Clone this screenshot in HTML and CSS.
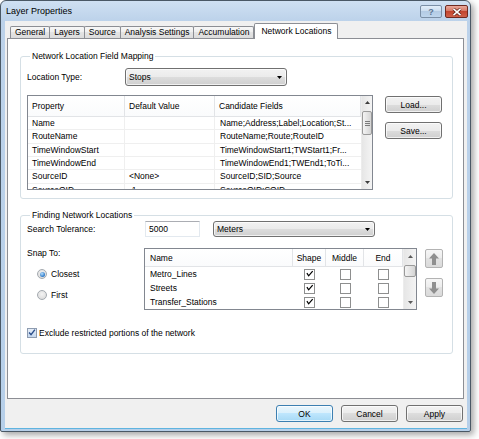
FILE: index.html
```html
<!DOCTYPE html>
<html>
<head>
<meta charset="utf-8">
<title>Layer Properties</title>
<link rel="stylesheet" href="styles.css">
</head>
<body>
<div class="window">
  <div class="titlebar">
    <span class="title">Layer Properties</span>
    <div class="caption">
      <span class="cap help">?</span>
      <span class="cap close"><svg width="10" height="8" viewBox="0 0 10 8"><path d="M1.5 0.8 L8.5 7.2 M8.5 0.8 L1.5 7.2" stroke="#5a1d14" stroke-width="3"/><path d="M1.5 0.8 L8.5 7.2 M8.5 0.8 L1.5 7.2" stroke="#fff" stroke-width="1.6"/></svg></span>
    </div>
  </div>
  <div class="client">
    <div class="tabs">
      <span class="tab">General</span>
      <span class="tab">Layers</span>
      <span class="tab">Source</span>
      <span class="tab">Analysis Settings</span>
      <span class="tab">Accumulation</span>
      <span class="tab active">Network Locations</span>
    </div>
    <div class="panel">
      <fieldset class="group map-group">
        <legend>Network Location Field Mapping</legend>
        <div class="type-row">
          <span class="label type-label">Location Type:</span>
          <div class="combo type-combo"><span>Stops</span><svg width="5" height="3" viewBox="0 0 5 3"><polygon points="0,0 5,0 2.5,3" fill="#000"/></svg></div>
        </div>
        <div class="mapping">
          <div class="listview map-list">
            <div class="lv-main">
              <div class="lv-head map-cols">
                <span>Property</span><span>Default Value</span><span>Candidate Fields</span>
              </div>
              <div class="lv-row map-cols"><span>Name</span><span></span><span>Name;Address;Label;Location;St...</span></div>
              <div class="lv-row map-cols"><span>RouteName</span><span></span><span>RouteName;Route;RouteID</span></div>
              <div class="lv-row map-cols"><span>TimeWindowStart</span><span></span><span>TimeWindowStart1;TWStart1;Fr...</span></div>
              <div class="lv-row map-cols"><span>TimeWindowEnd</span><span></span><span>TimeWindowEnd1;TWEnd1;ToTi...</span></div>
              <div class="lv-row map-cols"><span>SourceID</span><span>&lt;None&gt;</span><span>SourceID;SID;Source</span></div>
              <div class="lv-row map-cols"><span>SourceOID</span><span>-1</span><span>SourceOID;SOID</span></div>
            </div>
            <div class="vscroll vs-map">
              <span class="sb-arrow"><svg width="5" height="3" viewBox="0 0 5 3"><polygon points="0,3 5,3 2.5,0" fill="#3d3d3d"/></svg></span>
              <span class="sb-thumb"><i></i><i></i><i></i></span>
              <span class="sb-track"></span>
              <span class="sb-arrow"><svg width="5" height="3" viewBox="0 0 5 3"><polygon points="0,0 5,0 2.5,3" fill="#3d3d3d"/></svg></span>
            </div>
          </div>
          <div class="side-btns">
            <span class="btn">Load...</span>
            <span class="btn">Save...</span>
          </div>
        </div>
      </fieldset>

      <fieldset class="group find-group">
        <legend>Finding Network Locations</legend>
        <div class="tol-row">
          <span class="label tol-label">Search Tolerance:</span>
          <span class="textbox">5000</span>
          <div class="combo units-combo"><span>Meters</span><svg width="5" height="3" viewBox="0 0 5 3"><polygon points="0,0 5,0 2.5,3" fill="#000"/></svg></div>
        </div>
        <div class="snap-row">
          <div class="snap-col">
            <span class="label snap-label">Snap To:</span>
            <label class="radio-row"><span class="radio on"></span>Closest</label>
            <label class="radio-row"><span class="radio"></span>First</label>
          </div>
          <div class="listview snap-list">
            <div class="lv-main">
              <div class="lv-head snap-cols">
                <span>Name</span><span class="c">Shape</span><span class="c">Middle</span><span class="c">End</span>
              </div>
              <div class="snap-row-item snap-cols">
                <span>Metro_Lines</span>
                <span class="c"><span class="chk on"><svg width="9" height="9" viewBox="0 0 9 9"><path d="M1 3 L3 6 L7.5 0.8" fill="none" stroke="#000" stroke-width="1.4"/></svg></span></span>
                <span class="c"><span class="chk"></span></span>
                <span class="c"><span class="chk"></span></span>
              </div>
              <div class="snap-row-item snap-cols">
                <span>Streets</span>
                <span class="c"><span class="chk on"><svg width="9" height="9" viewBox="0 0 9 9"><path d="M1 3 L3 6 L7.5 0.8" fill="none" stroke="#000" stroke-width="1.4"/></svg></span></span>
                <span class="c"><span class="chk"></span></span>
                <span class="c"><span class="chk"></span></span>
              </div>
              <div class="snap-row-item snap-cols">
                <span>Transfer_Stations</span>
                <span class="c"><span class="chk on"><svg width="9" height="9" viewBox="0 0 9 9"><path d="M1 3 L3 6 L7.5 0.8" fill="none" stroke="#000" stroke-width="1.4"/></svg></span></span>
                <span class="c"><span class="chk"></span></span>
                <span class="c"><span class="chk"></span></span>
              </div>
            </div>
            <div class="vscroll vs-snap">
              <span class="sb-arrow up2"><svg width="5" height="3" viewBox="0 0 5 3"><polygon points="0,3 5,3 2.5,0" fill="#5a5a5a"/></svg></span>
              <span class="sb-thumb small"></span>
              <span class="sb-track"></span>
              <span class="sb-arrow down2"><svg width="5" height="3" viewBox="0 0 5 3"><polygon points="0,0 5,0 2.5,3" fill="#5a5a5a"/></svg></span>
            </div>
          </div>
          <div class="move-btns">
            <span class="move-btn"><svg width="10" height="12" viewBox="0 0 10 12"><path d="M5 0 L10 5.5 L7 5.5 L7 12 L3 12 L3 5.5 L0 5.5 Z" fill="#8f8f8f"/></svg></span>
            <span class="move-btn"><svg width="10" height="12" viewBox="0 0 10 12"><path d="M5 12 L10 6.5 L7 6.5 L7 0 L3 0 L3 6.5 L0 6.5 Z" fill="#8f8f8f"/></svg></span>
          </div>
        </div>
        <label class="exclude-row"><span class="chk blue"><svg width="9" height="9" viewBox="0 0 9 9"><path d="M1.2 4.5 L3.4 7 L7.8 1.2" fill="none" stroke="#2b4f8c" stroke-width="1.6"/></svg></span>Exclude restricted portions of the network</label>
      </fieldset>
    </div>
    <div class="footer">
      <span class="btn default">OK</span>
      <span class="btn">Cancel</span>
      <span class="btn">Apply</span>
    </div>
  </div>
</div>
</body>
</html>
```

FILE: styles.css
```css
* { box-sizing: border-box; }
html, body { margin: 0; padding: 0; background: #fff; }
body {
  font-family: "Liberation Sans", Arial, sans-serif;
  font-size: 8.5px;
  color: #000;
  width: 479px;
  height: 439px;
  overflow: hidden;
}

.window {
  width: 471px;
  height: 432px;
  border: 1px solid #4a5865;
  border-radius: 6px 6px 2px 2px;
  background: linear-gradient(#cfe0f2, #bcd2ea 20px, #b6cfe9);
  box-shadow: 3px 3px 6px rgba(0, 0, 0, 0.35);
  padding: 0 3px 2px 4px;
  display: flex;
  flex-direction: column;
}

.titlebar {
  height: 20px;
  margin: 0 -3px 0 -4px;
  padding: 0 2px 0 5px;
  display: flex;
  align-items: center;
  justify-content: space-between;
}
.title { font-size: 9px; color: #000; }
.caption { display: flex; gap: 3px; align-self: flex-start; margin-top: 4px; }
.cap {
  height: 13px;
  border-radius: 2px;
  display: flex;
  align-items: center;
  justify-content: center;
}
.help {
  width: 22px;
  border: 1px solid #7b8fa6;
  background: linear-gradient(#e3eef9, #c9dbee 50%, #b4cbe4 50%, #bed5ec);
  color: #5d7592;
  font-weight: bold;
  font-size: 9px;
}
.close {
  width: 23px;
  border: 1px solid #6e2a21;
  background: linear-gradient(#e9a99c, #d4735f 50%, #c2452f 50%, #d0614a);
}

.client {
  flex: 1;
  background: #f0f0f0;
  display: flex;
  flex-direction: column;
  border-bottom: 1px solid #5fb4e0;
}

.tabs {
  height: 17px;
  display: flex;
  align-items: flex-end;
  padding-left: 5px;
}
.tab {
  height: 12px;
  line-height: 11px;
  padding: 0 4px;
  border: 1px solid #8c8e94;
  border-bottom: none;
  margin-right: -1px;
  border-radius: 2px 2px 0 0;
  background: linear-gradient(#f7f7f7, #eeeeee 50%, #e4e4e4 50%, #dcdcdc);
  white-space: nowrap;
}
.tab.active {
  height: 16px;
  line-height: 14px;
  padding: 0 6px;
  margin: 0 0 -1px 1px;
  background: #fff;
  position: relative;
  z-index: 1;
}

.panel {
  height: 361px;
  margin: 0 3px 0 2px;
  background: #fff;
  border: 1px solid #8c8e94;
  padding-top: 11px;
}

.group {
  border: 1px solid #d5dfe5;
  border-radius: 3px;
  margin: 0 10px 0 12px;
  padding: 0 0 8px 6px;
  min-width: 0;
}
.group legend {
  padding: 0 2px;
  margin-left: 3px;
  height: 12px;
  line-height: 12px;
}
.find-group { margin-top: 10px; padding-bottom: 15px; }

.label { white-space: nowrap; }
.type-row { display: flex; align-items: center; height: 18px; margin-top: 6px; }
.type-label { width: 98px; }

.combo {
  height: 18px;
  border: 1px solid #707070;
  border-radius: 3px;
  background: linear-gradient(#f2f2f2, #ebebeb 50%, #dddddd 50%, #cfcfcf);
  box-shadow: inset 0 0 0 1px rgba(255, 255, 255, 0.7);
  display: flex;
  align-items: center;
  justify-content: space-between;
  padding: 0 4px 0 3px;
}
.type-combo { width: 162px; }
.units-combo { width: 162px; height: 16px; margin-left: 13px; }

.mapping { display: flex; gap: 12px; margin-top: 9px; }

.listview {
  border: 1px solid #828790;
  background: #fff;
  display: flex;
  overflow: hidden;
}
.lv-main { flex: 1; min-width: 0; overflow: hidden; }
.map-list { width: 346px; height: 95px; }
.map-cols { display: grid; grid-template-columns: 97px 90px 1fr; }
.lv-head { background: linear-gradient(#ffffff, #fafbfc); }
.map-list .lv-head { height: 21px; border-bottom: 1px solid #e2e4e7; }
.lv-head > span {
  display: flex;
  align-items: center;
  padding-left: 4px;
  border-right: 1px solid #e2e4e7;
  white-space: nowrap;
}
.lv-head > span.c { justify-content: center; padding-left: 0; }
.lv-row { height: 13.34px; border-bottom: 1px solid #efefef; }
.lv-row > span {
  display: flex;
  align-items: center;
  padding-left: 4px;
  border-right: 1px solid #efefef;
  white-space: nowrap;
  overflow: hidden;
}
.lv-row > span:last-child { padding-left: 5px; border-right: none; }

.vscroll {
  background: linear-gradient(90deg, #e6e6e6, #f4f4f4);
  border-left: 1px solid #ececec;
  display: flex;
  flex-direction: column;
}
.vs-map { width: 11px; }
.vs-snap { width: 13px; }
.sb-arrow { height: 13px; display: flex; align-items: center; justify-content: center; }
.sb-track { flex: 1; }
.sb-thumb {
  margin: 2px 0 0;
  height: 24px;
  border: 1px solid #9a9a9a;
  border-radius: 2px;
  background: linear-gradient(90deg, #f4f4f4, #e4e4e4 50%, #d4d4d4);
  display: flex;
  flex-direction: column;
  align-items: center;
  justify-content: center;
  gap: 1px;
}
.sb-thumb i { display: block; width: 5px; height: 1px; background: #7a7a7a; }
.sb-thumb.small { height: 12px; margin-top: 1px; }
.up2 { height: 15px; }
.down2 { height: 14px; }

.side-btns { display: flex; flex-direction: column; gap: 9px; padding-top: 1px; }

.btn {
  width: 57px;
  height: 17px;
  border: 1px solid #707070;
  border-radius: 3px;
  background: linear-gradient(#f2f2f2, #ebebeb 50%, #dddddd 50%, #cfcfcf);
  box-shadow: inset 0 0 0 1px rgba(255, 255, 255, 0.7);
  display: flex;
  align-items: center;
  justify-content: center;
}
.btn.default {
  border-color: #3c7fb1;
  background: linear-gradient(#eaf6fd, #d9f0fc 50%, #bee6fd 50%, #a7d9f5);
}

.tol-row { display: flex; align-items: center; height: 16px; }
.tol-label { width: 118px; }
.textbox {
  width: 55px;
  height: 16px;
  border: 1px solid #e3e9ef;
  border-top-color: #abadb3;
  background: #fff;
  display: flex;
  align-items: center;
  padding-left: 3px;
}

.snap-row { display: flex; margin-top: 11px; }
.snap-col { width: 117px; display: flex; flex-direction: column; }
.snap-label { line-height: 10px; height: 10px; }
.radio-row {
  display: flex;
  align-items: center;
  gap: 4px;
  height: 10px;
  margin-top: 11px;
  padding-left: 10px;
}
.radio {
  width: 10px;
  height: 10px;
  border-radius: 50%;
  border: 1px solid #a4aab0;
  background: radial-gradient(circle at 50% 40%, #f4f4f4, #d6d6d6);
  display: flex;
  align-items: center;
  justify-content: center;
}
.radio.on::after {
  content: "";
  width: 5px;
  height: 5px;
  border-radius: 50%;
  background: radial-gradient(circle at 40% 35%, #b7e0ff, #2b77c6 70%);
}

.snap-list { width: 273px; height: 62px; }
.snap-cols { display: grid; grid-template-columns: 148px 33px 38px 39px; }
.snap-list .lv-head { height: 18px; border-bottom: 1px solid #e2e4e7; }
.snap-list .lv-head > span:first-child { padding-left: 5px; }
.snap-row-item { height: 14px; }
.snap-row-item > span { display: flex; align-items: center; padding-left: 5px; white-space: nowrap; }
.snap-row-item > span.c { justify-content: center; padding-left: 0; }

.chk {
  width: 11px;
  height: 11px;
  border: 1px solid #8e8f8f;
  background: #fff;
  display: flex;
  align-items: center;
  justify-content: center;
}
.chk.on { align-items: flex-start; justify-content: flex-start; padding: 0 0 0 1px; }
.chk.blue {
  width: 10px;
  height: 10px;
  border-color: #8e9cb0;
  background: linear-gradient(#e6eef8, #c5d8ef);
}

.move-btns { display: flex; flex-direction: column; gap: 10px; margin: 1px 0 0 8px; }
.move-btn {
  width: 18px;
  height: 19px;
  border: 1px solid #b3b3b3;
  border-radius: 2px;
  background: linear-gradient(#f6f6f6, #ececec 50%, #e2e2e2 50%, #dadada);
  display: flex;
  align-items: center;
  justify-content: center;
}

.exclude-row {
  display: flex;
  align-items: center;
  gap: 2px;
  height: 11px;
  margin-top: 17px;
}

.footer {
  display: flex;
  justify-content: flex-end;
  gap: 8px;
  padding: 6px 4px 0 0;
}
```
